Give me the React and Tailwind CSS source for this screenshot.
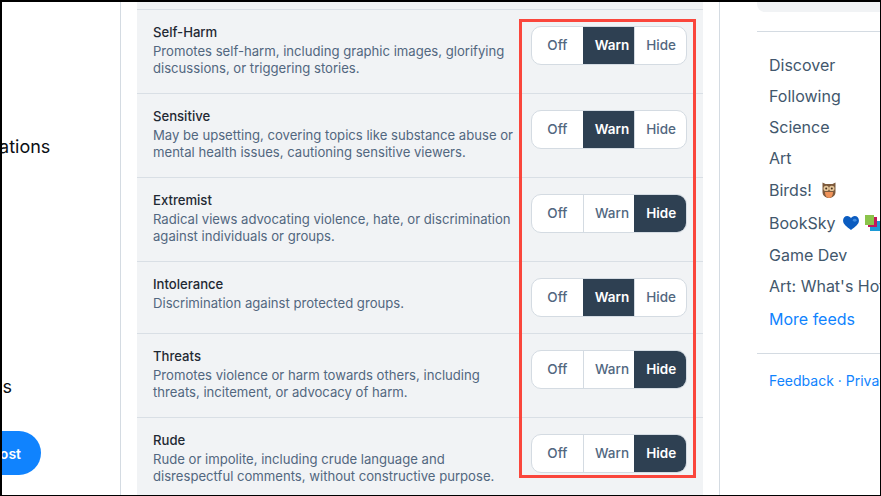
const rows = [
  { title: 'Self-Harm', desc: 'Promotes self-harm, including graphic images, glorifying discussions, or triggering stories.', value: 'Warn' },
  { title: 'Sensitive', desc: 'May be upsetting, covering topics like substance abuse or mental health issues, cautioning sensitive viewers.', value: 'Warn' },
  { title: 'Extremist', desc: 'Radical views advocating violence, hate, or discrimination against individuals or groups.', value: 'Hide' },
  { title: 'Intolerance', desc: 'Discrimination against protected groups.', value: 'Warn' },
  { title: 'Threats', desc: 'Promotes violence or harm towards others, including threats, incitement, or advocacy of harm.', value: 'Hide' },
  { title: 'Rude', desc: 'Rude or impolite, including crude language and disrespectful comments, without constructive purpose.', value: 'Hide' },
]

const navItems = ['Notifications', 'Chat', 'Feeds', 'Lists', 'Profile', 'Settings']

function Owl() {
  return (
    <svg width="14" height="16" viewBox="0 0 14 16" className="ml-[10px] shrink-0">
      <path d="M0.5 0.5 L3.5 2 H10.5 L13.5 0.5 V10 C13.5 13.5 10.5 16 7 16 C3.5 16 0.5 13.5 0.5 10 Z" fill="#7d5a3c" />
      <path d="M3 10 H11 C11 13 9.5 16 7 16 C4.5 16 3 13 3 10 Z" fill="#f0935a" />
      <circle cx="4.2" cy="6.4" r="2.7" fill="#e6c79a" />
      <circle cx="9.8" cy="6.4" r="2.7" fill="#e6c79a" />
      <circle cx="4.2" cy="6.4" r="1" fill="#4a3322" />
      <circle cx="9.8" cy="6.4" r="1" fill="#4a3322" />
    </svg>
  )
}

function Heart() {
  return (
    <svg width="16" height="14" viewBox="0 0 17 15" className="ml-[8px] shrink-0">
      <path d="M8.5 15 C4 11.5 0 9 0 4.8 C0 2 2 0 4.5 0 C6.2 0 7.7 1 8.5 2.4 C9.3 1 10.8 0 12.5 0 C15 0 17 2 17 4.8 C17 9 13 11.5 8.5 15 Z" fill="#0b5cc0" />
      <ellipse cx="12.5" cy="4.5" rx="2" ry="1.6" fill="#3f8be0" />
    </svg>
  )
}

function Books() {
  return (
    <svg width="16" height="16" viewBox="0 0 16 16" className="ml-[6px] shrink-0">
      <rect x="5" y="6" width="11" height="10" fill="#1c9ad6" />
      <rect x="3" y="2" width="9" height="10" fill="#c2185b" />
      <rect x="0" y="0" width="9" height="10" fill="#8bc34a" />
    </svg>
  )
}

function FeedLink({ className = 'h-[31px]', children }) {
  return (
    <div className={className + ' flex items-center whitespace-nowrap text-[16px] text-[#42576c]'}>{children}</div>
  )
}

function Segment({ value }) {
  return (
    <div className="flex h-[39px] w-[156px] shrink-0 overflow-hidden rounded-[10px] border border-[#d4dbe2] bg-white text-[13.5px]">
      {['Off', 'Warn', 'Hide'].map((opt, i) => (
        <div
          key={opt}
          className={
            'flex flex-1 items-center justify-center font-medium ' +
            (i > 0 ? 'border-l ' : '') +
            (opt === value ? 'border-[#2e4052] bg-[#2e4052] font-semibold text-white' : 'border-[#d4dbe2] text-[#52677f]')
          }
        >
          <span className={opt === 'Warn' ? 'ml-[6px]' : opt === 'Hide' ? 'ml-[1px]' : ''}>{opt}</span>
        </div>
      ))}
    </div>
  )
}

export default function App() {
  return (
    <div className="h-[496px] w-[881px] overflow-hidden bg-black pb-px pl-[2px] pr-px pt-[2px]" style={{ fontFamily: 'Inter, sans-serif' }}>
      <div className="relative flex h-full overflow-hidden bg-white">
        <aside className="relative w-[118px] shrink-0">
          <div className="ml-[-59px] flex flex-col pt-[120px] text-[18px] text-[#0b0f14]">
            {navItems.map((item) => (
              <div key={item} className="flex h-[48px] items-center whitespace-nowrap">{item}</div>
            ))}
          </div>
          <div className="absolute left-[-60px] top-[429px] flex h-[44px] w-[99px] items-center justify-center rounded-full bg-[#1083fe] text-[14px] font-semibold text-white">
            <span className="ml-[-5px] whitespace-nowrap">New Post</span>
          </div>
        </aside>

        <main className="w-[600px] shrink-0 border-x border-[#d4dbe2] px-4">
          <div className="h-full bg-[#f1f3f5] pt-[7px]">
            {rows.map((row) => (
              <div key={row.title} className="flex gap-[12px] border-t border-[#d9dfe5] px-4 py-4">
                <div className="min-w-0 flex-1">
                  <div className="mb-1 text-[13.125px] font-medium leading-[13px] text-[#1f2933]">{row.title}</div>
                  <div className="text-[13.125px] leading-[17px] text-[#52677f]">{row.desc}</div>
                </div>
                <Segment value={row.value} />
              </div>
            ))}
          </div>
        </main>

        <aside className="min-w-0 flex-1 overflow-hidden pl-[37px]">
          <div className="h-[10px] rounded-bl-[8px] bg-[#f1f3f5]" />
          <div className="mt-[19px] border-t border-[#d4dbe2] pl-[12px] pt-[17px]">
            <FeedLink>Discover</FeedLink>
            <FeedLink>Following</FeedLink>
            <FeedLink>Science</FeedLink>
            <FeedLink>Art</FeedLink>
            <FeedLink className="h-[34px] pb-[1px]">Birds!<Owl /></FeedLink>
            <FeedLink className="h-[32px]">BookSky<Heart /><Books /></FeedLink>
            <FeedLink>Game Dev</FeedLink>
            <FeedLink>Art: What's Hot</FeedLink>
            <div className="mt-[2px] flex h-[31px] items-center text-[16px] text-[#1083fe]">More feeds</div>
          </div>
          <div className="mt-[19px] whitespace-nowrap border-t border-[#d4dbe2] pl-[12px] pt-[16px] text-[14px] text-[#1083fe]">
            Feedback · Privacy · Terms
          </div>
        </aside>

        {/* red annotation box drawn over the screenshot */}
        <div className="absolute left-[517px] top-[17px] h-[459px] w-[177px] border-[3px] border-[#fa463c]" />
      </div>
    </div>
  )
}
